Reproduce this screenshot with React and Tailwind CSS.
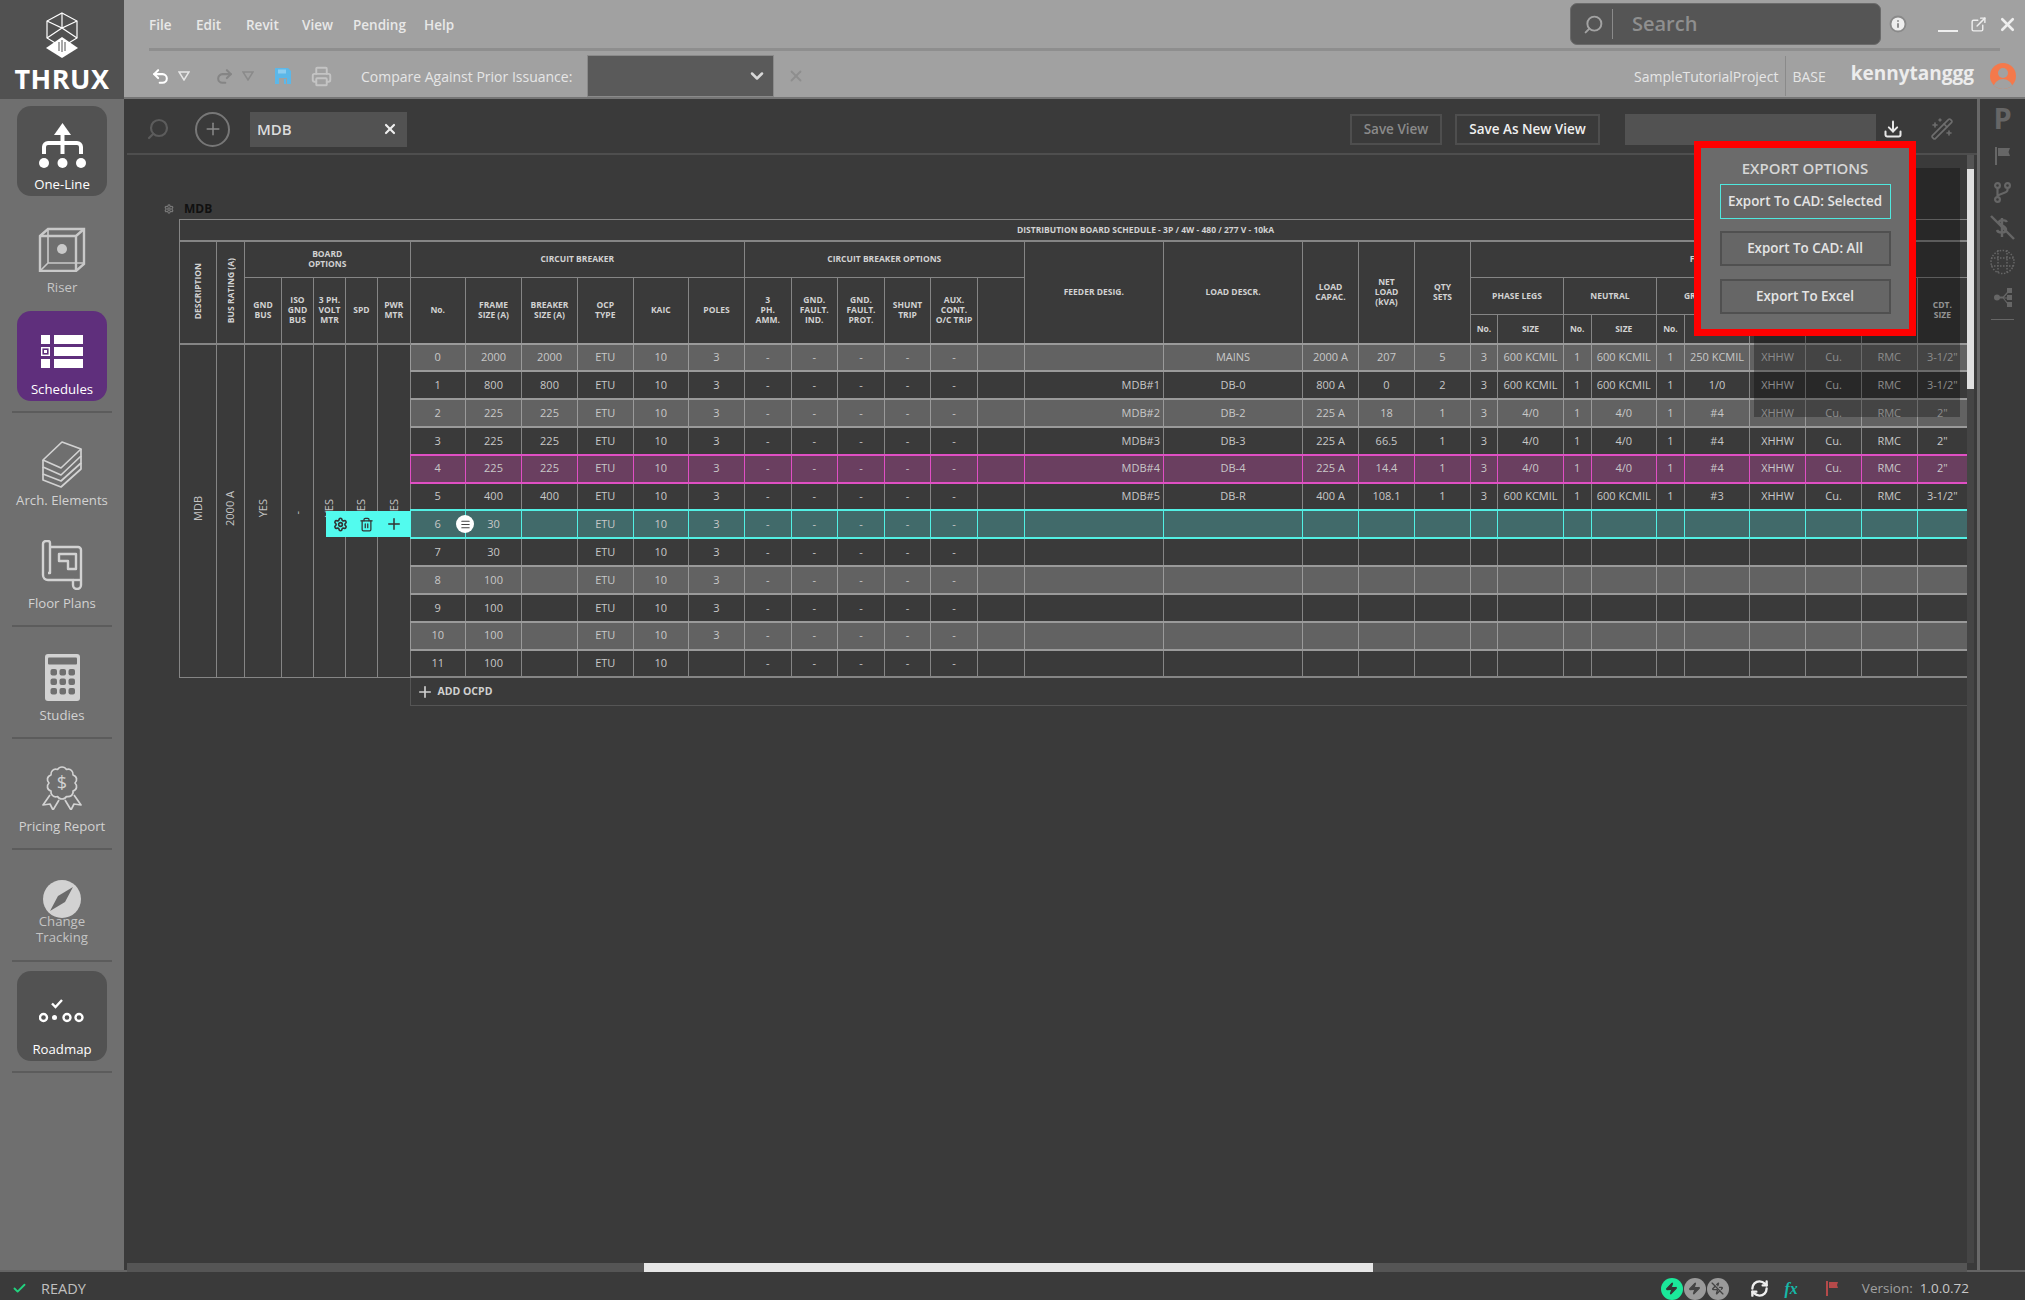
import { Settings, Trash2, Plus, Menu, X, Search, Info, ChevronDown, Undo2, Redo2, Printer, Download, WandSparkles, Check, Zap, ZapOff, RefreshCw, ExternalLink } from "lucide-react";

const colWidths = [
  "w-[37px]", "w-[28px]", "w-[37px]", "w-[32px]", "w-[32px]", "w-[32px]", "w-[32.5px]",
  "w-[55.5px]", "w-[56px]", "w-[56px]", "w-[55.5px]", "w-[55.5px]", "w-[56px]",
  "w-[46.5px]", "w-[46.5px]", "w-[47px]", "w-[46px]", "w-[47px]", "w-[46.5px]",
  "w-[139.5px]", "w-[139px]", "w-[56px]", "w-[56px]", "w-[56px]",
  "w-[27px]", "w-[66px]", "w-[27.5px]", "w-[65.5px]", "w-[28px]", "w-[65px]",
  "w-[56px]", "w-[56px]", "w-[55.5px]", "w-[50.5px]",
];

const big = ["3", "600 KCMIL", "1", "600 KCMIL", "1"];
const small = ["3", "4/0", "1", "4/0", "1"];
const dashes = ["-", "-", "-", "-", "-", ""];
const tail = ["XHHW", "Cu.", "RMC"];
const blankTail = Array(16).fill("");

const rows = [
  { tone: "gray", cells: ["0", "2000", "2000", "ETU", "10", "3", ...dashes, "", "MAINS", "2000 A", "207", "5", ...big, "250 KCMIL", ...tail, '3-1/2"'] },
  { tone: "plain", cells: ["1", "800", "800", "ETU", "10", "3", ...dashes, "MDB#1", "DB-0", "800 A", "0", "2", ...big, "1/0", ...tail, '3-1/2"'] },
  { tone: "gray", cells: ["2", "225", "225", "ETU", "10", "3", ...dashes, "MDB#2", "DB-2", "225 A", "18", "1", ...small, "#4", ...tail, '2"'] },
  { tone: "plain", cells: ["3", "225", "225", "ETU", "10", "3", ...dashes, "MDB#3", "DB-3", "225 A", "66.5", "1", ...small, "#4", ...tail, '2"'] },
  { tone: "purple", cells: ["4", "225", "225", "ETU", "10", "3", ...dashes, "MDB#4", "DB-4", "225 A", "14.4", "1", ...small, "#4", ...tail, '2"'] },
  { tone: "plain", cells: ["5", "400", "400", "ETU", "10", "3", ...dashes, "MDB#5", "DB-R", "400 A", "108.1", "1", ...big, "#3", ...tail, '3-1/2"'] },
  { tone: "teal", cells: ["6", "30", "", "ETU", "10", "3", ...dashes, "", ...blankTail] },
  { tone: "plain", cells: ["7", "30", "", "ETU", "10", "3", ...dashes, "", ...blankTail] },
  { tone: "gray", cells: ["8", "100", "", "ETU", "10", "3", ...dashes, "", ...blankTail] },
  { tone: "plain", cells: ["9", "100", "", "ETU", "10", "3", ...dashes, "", ...blankTail] },
  { tone: "gray", cells: ["10", "100", "", "ETU", "10", "3", ...dashes, "", ...blankTail] },
  { tone: "plain", cells: ["11", "100", "", "ETU", "10", "", ...dashes, "", ...blankTail] },
];

const toneCell = {
  gray: "bg-[#626262] border-[#9a9a9a]",
  plain: "bg-[#3a3a3a] border-[#858585]",
  purple: "bg-[#6a3f60] border-[#e04fc4]",
  teal: "bg-[#416a6a] border-[#52f0e4]",
};
const nextBottom = {
  purple: "border-b-[#e04fc4]",
  teal: "border-b-[#52f0e4]",
  gray: "border-b-[#9a9a9a]",
  plain: "",
};

function Th({ children, className = "", ...props }) {
  return (
    <th
      {...props}
      className={`border border-[#858585] p-0 text-center align-middle text-[8.5px] font-bold leading-[10px] text-[#d2d2d2] ${className}`}
    >
      {children}
    </th>
  );
}

function VerticalHead({ children }) {
  return <span className="inline-block rotate-180 [writing-mode:vertical-rl]">{children}</span>;
}

function VerticalCell({ children, last }) {
  return (
    <td rowSpan={12} className={`border border-t-2 border-[#858585] bg-[#3a3a3a] p-0 text-center align-middle text-[11px] text-[#c4c4c4] ${last ? "border-r-0" : ""}`}>
      <span className="inline-block rotate-180 [writing-mode:vertical-rl]">{children}</span>
    </td>
  );
}

function ScheduleTable() {
  return (
    <table className="w-[1788px] table-fixed border-collapse">
      <colgroup>
        {colWidths.map((w, i) => (
          <col key={i} className={w} />
        ))}
      </colgroup>
      <thead>
        <tr className="h-[21px]">
          <Th colSpan={34} className="border-b-2 pl-[144px]">
            DISTRIBUTION BOARD SCHEDULE - 3P / 4W - 480 / 277 V - 10kA
          </Th>
        </tr>
        <tr className="h-[37px]">
          <Th rowSpan={3}><VerticalHead>DESCRIPTION</VerticalHead></Th>
          <Th rowSpan={3}><VerticalHead>BUS RATING (A)</VerticalHead></Th>
          <Th colSpan={5}>BOARD<br />OPTIONS</Th>
          <Th colSpan={6}>CIRCUIT BREAKER</Th>
          <Th colSpan={6}>CIRCUIT BREAKER OPTIONS</Th>
          <Th rowSpan={3}>FEEDER DESIG.</Th>
          <Th rowSpan={3}>LOAD DESCR.</Th>
          <Th rowSpan={3}>LOAD<br />CAPAC.</Th>
          <Th rowSpan={3}>NET<br />LOAD<br />(kVA)</Th>
          <Th rowSpan={3}>QTY<br />SETS</Th>
          <Th colSpan={10} className="pr-[28px]">FEEDER</Th>
        </tr>
        <tr className="h-[37px]">
          <Th rowSpan={2}>GND<br />BUS</Th>
          <Th rowSpan={2}>ISO<br />GND<br />BUS</Th>
          <Th rowSpan={2}>3 PH.<br />VOLT<br />MTR</Th>
          <Th rowSpan={2}>SPD</Th>
          <Th rowSpan={2}>PWR<br />MTR</Th>
          <Th rowSpan={2}>No.</Th>
          <Th rowSpan={2}>FRAME<br />SIZE (A)</Th>
          <Th rowSpan={2}>BREAKER<br />SIZE (A)</Th>
          <Th rowSpan={2}>OCP<br />TYPE</Th>
          <Th rowSpan={2}>KAIC</Th>
          <Th rowSpan={2}>POLES</Th>
          <Th rowSpan={2}>3<br />PH.<br />AMM.</Th>
          <Th rowSpan={2}>GND.<br />FAULT.<br />IND.</Th>
          <Th rowSpan={2}>GND.<br />FAULT.<br />PROT.</Th>
          <Th rowSpan={2}>SHUNT<br />TRIP</Th>
          <Th rowSpan={2}>AUX.<br />CONT.<br />O/C TRIP</Th>
          <Th rowSpan={2}></Th>
          <Th colSpan={2}>PHASE LEGS</Th>
          <Th colSpan={2}>NEUTRAL</Th>
          <Th colSpan={2}>GROUND</Th>
          <Th rowSpan={2}>COND.<br />TYPE</Th>
          <Th rowSpan={2}>COND.<br />MAT.</Th>
          <Th rowSpan={2}>CDT.<br />TYPE</Th>
          <Th rowSpan={2}>CDT.<br />SIZE</Th>
        </tr>
        <tr className="h-[29px]">
          <Th>No.</Th><Th>SIZE</Th><Th>No.</Th><Th>SIZE</Th><Th>No.</Th><Th>SIZE</Th>
        </tr>
      </thead>
      <tbody>
        {rows.map((row, r) => {
          const next = rows[r + 1];
          return (
            <tr key={row.cells[0]} className="h-[27.83px]">
              {r === 0 ? (
                <>
                  <VerticalCell>MDB</VerticalCell>
                  <VerticalCell>2000 A</VerticalCell>
                  <VerticalCell>YES</VerticalCell>
                  <VerticalCell>-</VerticalCell>
                  <VerticalCell>YES</VerticalCell>
                  <VerticalCell>YES</VerticalCell>
                  <VerticalCell last>YES</VerticalCell>
                </>
              ) : null}
              {row.cells.map((cell, c) => (
                <td
                  key={c}
                  className={`relative border border-y-2 p-0 text-[11px] text-[#c8c8c8] ${toneCell[row.tone]} ${next ? nextBottom[next.tone] : ""} ${c === 12 ? "pr-[3px] text-right" : "text-center"}`}
                >
                  {cell}
                  {row.tone === "teal" && c === 0 ? (
                    <div className="absolute right-full top-0 flex h-full w-[85px] items-center justify-around bg-[#52fbee] px-[2px] text-[#333]">
                      <Settings size={15} strokeWidth={2.6} />
                      <Trash2 size={15} strokeWidth={2} />
                      <Plus size={18} strokeWidth={2} />
                    </div>
                  ) : null}
                  {row.tone === "teal" && c === 0 ? (
                    <div className="absolute -right-[9px] top-[4px] z-10 flex h-[18px] w-[18px] items-center justify-center rounded-full bg-white text-[#444]">
                      <Menu size={11} strokeWidth={2.5} />
                    </div>
                  ) : null}
                </td>
              ))}
            </tr>
          );
        })}
        <tr className="h-[28px]">
          <td colSpan={7} className="p-0"></td>
          <td colSpan={27} className="border-b border-l border-[#555] p-0">
            <div className="flex items-center pl-[5px] text-[10.5px] font-bold text-[#d0d0d0]">
              <Plus size={18} strokeWidth={2.2} className="mr-[4px]" />
              ADD OCPD
            </div>
          </td>
        </tr>
      </tbody>
    </table>
  );
}

function Logo() {
  return (
    <div className="flex h-[99px] flex-col items-center bg-[#515151] pt-[12px]">
      <svg width="32" height="46" viewBox="0 0 32 46" fill="none" stroke="#fff" strokeWidth="1.2">
        <path d="M16 1 31 9v17l-15 9-15-9V9z" />
        <path d="M1 9l15 7 15-7M16 1v15M1 26l15-10 15 10" />
        <path d="M16 25 32 36 16 46 0 36z" fill="#fff" stroke="none" />
        <path d="M13 30v9M16 28v12M19 30v9" stroke="#515151" strokeWidth="1" />
      </svg>
      <div className="mt-[7px] text-[27px] font-bold leading-[28px] tracking-[0.5px] text-white">THRUX</div>
    </div>
  );
}

function OneLineIcon() {
  return (
    <svg width="47" height="46" viewBox="0 0 47 46" fill="none" stroke="#fff" strokeWidth="4">
      <path d="M23.5 0 32 12H15z" fill="#fff" stroke="none" />
      <path d="M23.5 10v21" />
      <path d="M5 31v-7a4 4 0 0 1 4-4h29a4 4 0 0 1 4 4v7" />
      <circle cx="5" cy="40" r="5" fill="#fff" stroke="none" />
      <circle cx="23.5" cy="40" r="5" fill="#fff" stroke="none" />
      <circle cx="42" cy="40" r="5" fill="#fff" stroke="none" />
    </svg>
  );
}

function RiserIcon() {
  return (
    <svg width="48" height="45" viewBox="0 0 48 45" fill="none" stroke="#c9c9c9" strokeWidth="2.4">
      <path d="M2 9 10 2h36v35l-8 7H2z" />
      <path d="M2 9h36v35M38 9l8-7" />
      <path d="M10 2v34h36M10 36l-8 8" strokeWidth="1.6" />
      <circle cx="24" cy="22" r="5" fill="#c9c9c9" stroke="none" />
    </svg>
  );
}

function SchedulesIcon() {
  return (
    <svg width="42" height="33" viewBox="0 0 42 33" fill="#fff">
      <rect x="0" y="0" width="9" height="9" />
      <rect x="13" y="0" width="29" height="9" />
      <rect x="0.7" y="12.7" width="7.6" height="7.6" fill="none" stroke="#fff" strokeWidth="1.4" />
      <rect x="3" y="15" width="3" height="3" />
      <rect x="13" y="12" width="29" height="9" />
      <rect x="0" y="24" width="9" height="9" />
      <rect x="13" y="24" width="29" height="9" />
    </svg>
  );
}

function ArchIcon() {
  return (
    <svg width="40" height="47" viewBox="0 0 40 47" className="mt-[4px]" fill="none" stroke="#d2d2d2" strokeWidth="1.7" strokeLinejoin="round">
      <path d="M20 1 39 8 19 27 1 19z" />
      <path d="M1 19v7l18 8 20-19V8" />
      <path d="M1 26v7l18 7 20-18v-7" />
      <path d="M1 33v6l18 7 20-18v-6" />
    </svg>
  );
}

function FloorIcon() {
  return (
    <svg width="42" height="50" viewBox="0 0 42 50" fill="none" stroke="#d2d2d2" strokeWidth="2.4" strokeLinejoin="round">
      <path d="M9 7h28a3 3 0 0 1 3 3v35a4 4 0 0 1-4 4 4 4 0 0 1-4-4v-5H7a5 5 0 0 1-5-5V4a3 3 0 0 1 3-3h2a2 2 0 0 1 2 2v30H7" />
      <path d="M32 40h8" />
      <path d="M18 14h17v15h-8v-8h-9z" />
    </svg>
  );
}

function StudiesIcon() {
  const keys = [];
  for (let y of [15, 24.5, 34]) for (let x of [6, 15, 24]) keys.push([x, y]);
  return (
    <svg width="35" height="47" viewBox="0 0 35 47">
      <rect width="35" height="47" rx="3" fill="#d2d2d2" />
      <rect x="3" y="3.5" width="29" height="7" rx="1" fill="#6f6f6f" />
      {keys.map(([x, y]) => (
        <rect key={`${x}-${y}`} x={x - 3 + 2.5} y={y} width="6.5" height="6.5" rx="2" fill="#6f6f6f" />
      ))}
    </svg>
  );
}

function PricingIcon() {
  return (
    <svg width="40" height="44" viewBox="0 0 40 44" fill="none" stroke="#d2d2d2" strokeWidth="1.7" strokeLinejoin="round">
      <path d="M20 1q3 0 4.500 2.500 3-1 5 1t1.500 4.500q3 1 3.500 3.500t-1.500 4.500q2 2 1.500 4.500t-3.500 3.500q.5 3-1.500 4.500t-5 1Q23 33 20 33t-4.500-2.500q-3 1-5-1T9 25q-3-1-3.500-3.500T7 17q-2-2-1.500-4.500T9 9q-.5-2.500 1.500-4.500t5-1Q17 1 20 1z" />
      <path d="M8 29 1 39l7-1 3 6 6-10M32 29l7 10-7-1-3 6-6-10" />
      <text x="20" y="23" textAnchor="middle" fontSize="18" fill="#d2d2d2" stroke="none" fontFamily="Open Sans, sans-serif">$</text>
    </svg>
  );
}

function CompassIcon() {
  return (
    <svg width="38" height="38" viewBox="0 0 38 38">
      <circle cx="19" cy="19" r="19" fill="#d2d2d2" />
      <path d="M30 7 22 22 7 31 15 16z" fill="#6a6a6a" />
    </svg>
  );
}

function RoadmapIcon() {
  return (
    <svg width="46" height="24" viewBox="0 0 46 24" fill="none" stroke="#fff" strokeWidth="2.4">
      <path d="M13 4.500 16.500 8 23 1" />
      <circle cx="4.500" cy="18.500" r="3.500" />
      <circle cx="15.500" cy="18.500" r="2.500" fill="#fff" stroke="none" />
      <circle cx="28" cy="18.500" r="3.500" />
      <circle cx="40" cy="18.500" r="3.500" />
    </svg>
  );
}

function NavItem({ icon, label, active, className = "", labelClass = "mt-[6px] text-[#d2d2d2]" }) {
  return (
    <div className={`mx-auto flex h-[90px] w-[90px] shrink-0 flex-col items-center rounded-[14px] ${active || ""} ${className}`}>
      <div className="mt-[16px] flex h-[48px] items-center justify-center">{icon}</div>
      <div className={`whitespace-nowrap text-center text-[13.2px] leading-[16px] ${labelClass}`}>{label}</div>
    </div>
  );
}

function NavRule({ className = "" }) {
  return <div className={`mx-[12px] h-[2px] shrink-0 bg-[#5c5c5c] ${className}`} />;
}

function Sidebar() {
  return (
    <aside className="flex w-[124px] shrink-0 flex-col">
      <Logo />
      <nav className="flex flex-1 flex-col bg-[#6f6f6f] pt-[7px]">
        <NavItem icon={<OneLineIcon />} label="One-Line" active="bg-[#525252]" labelClass="mt-[6px] text-white" />
        <NavItem icon={<RiserIcon />} label="Riser" className="mt-[13px]" labelClass="mt-[6px] text-[#c6c6c6]" />
        <NavItem icon={<SchedulesIcon />} label="Schedules" active="bg-[#5f2f7c]" className="mt-[12px]" labelClass="mt-[6px] text-white" />
        <NavRule className="mt-[10px]" />
        <NavItem icon={<ArchIcon />} label="Arch. Elements" className="mt-[9px]" />
        <NavItem icon={<FloorIcon />} label="Floor Plans" className="mt-[13px]" />
        <NavRule className="mt-[10px]" />
        <NavItem icon={<StudiesIcon />} label="Studies" className="mt-[10px]" />
        <NavRule className="mt-[10px]" />
        <NavItem icon={<PricingIcon />} label="Pricing Report" className="mt-[9px]" />
        <NavRule className="mt-[10px]" />
        <NavItem
          icon={<CompassIcon />}
          label={<>Change<br />Tracking</>}
          className="mt-[9px]"
          labelClass="-mt-[10px] text-[#c4c4c4]"
        />
        <NavRule className="mt-[11px]" />
        <NavItem icon={<RoadmapIcon />} label="Roadmap" active="bg-[#525252]" className="mt-[9px]" labelClass="mt-[6px] text-white" />
        <NavRule className="mt-[10px]" />
      </nav>
    </aside>
  );
}

function Triangle({ color }) {
  return (
    <svg width="12" height="10" viewBox="0 0 12 10" fill="none" stroke={color} strokeWidth="1.5">
      <path d="M1 1h10L6 9z" />
    </svg>
  );
}

function TopBar() {
  return (
    <header className="h-[99px] shrink-0 border-b-2 border-[#757575] bg-[#a1a1a1]">
      <div className="flex h-[48px] items-center pl-[25px] pr-[7px] text-[13.5px] font-semibold text-[#e8e8e8]">
        <div className="mt-[2px] flex">
          <span className="w-[47px]">File</span>
          <span className="w-[50px]">Edit</span>
          <span className="w-[56px]">Revit</span>
          <span className="w-[51px]">View</span>
          <span className="w-[71px]">Pending</span>
          <span>Help</span>
        </div>
        <div className="ml-auto flex h-[42px] w-[311px] items-center rounded-[7px] border border-[#6b6b6b] bg-[#555555]">
          <Search size={21} strokeWidth={2.2} className="ml-[12px] -scale-x-100 text-[#a3a3a3]" />
          <div className="ml-[8px] h-[30px] w-px bg-[#8a8a8a]" />
          <span className="ml-[19px] text-[20px] font-semibold text-[#8f8f8f]">Search</span>
        </div>
        <Info size={18} strokeWidth={2.5} className="ml-[8px] fill-[#eeeeee] text-[#8a8a8a]" />
        <div className="ml-[31px] mt-[14px] h-[2px] w-[20px] bg-[#eeeeee]" />
        <ExternalLink size={17} strokeWidth={2} className="ml-[12px] text-[#eeeeee]" />
        <X size={21} strokeWidth={3} className="ml-[10px] text-[#eeeeee]" />
      </div>
      <div className="mx-[25px] h-[3px] bg-[#8e8e8e]" />
      <div className="flex h-[46px] items-center pl-[27px] pt-[4px] text-[14px] text-[#e6e6e6]">
        <Undo2 size={19} strokeWidth={2.6} className="text-white" />
        <div className="ml-[8px]"><Triangle color="#e6e6e6" /></div>
        <Redo2 size={19} strokeWidth={2.6} className="ml-[25px] text-[#858585]" />
        <div className="ml-[8px]"><Triangle color="#8a8a8a" /></div>
        <svg width="16" height="16" viewBox="0 0 16 16" className="ml-[21px]" fill="#5cb7e8">
          <path d="M0 0h13l3 3v13H0z" />
          <path d="M3 1.500h8v4H3z" fill="#8dcdf0" />
          <path d="M4 10h8v6H4z" fill="#a1a1a1" />
          <path d="M9 11h2v5H9z" fill="#5cb7e8" />
        </svg>
        <Printer size={21} strokeWidth={2.2} className="ml-[20px] text-[#c4c4c4]" />
        <span className="ml-[29px] w-[227px] whitespace-nowrap">Compare Against Prior Issuance:</span>
        <div className="flex h-[40px] w-[185px] items-center justify-end bg-[#5a5a5a] pr-[6px] shadow-[0_0_0_1px_#8a8a8a]">
          <ChevronDown size={20} strokeWidth={3} className="text-[#d8d8d8]" />
        </div>
        <X size={18} strokeWidth={2.4} className="ml-[14px] text-[#8e8e8e]" />
        <span className="ml-auto">SampleTutorialProject</span>
        <div className="ml-[7px] h-[40px] w-px bg-[#8a8a8a]" />
        <span className="ml-[6px]">BASE</span>
        <span className="ml-[25px] -mt-[6px] text-[19px] font-bold text-[#ececec]">kennytanggg</span>
        <div className="relative ml-[16px] mr-[9px] h-[26px] w-[26px] overflow-hidden rounded-full bg-[#f4794b]">
          <div className="mx-auto mt-[5px] h-[10px] w-[10px] rounded-full bg-[#a1a1a1]" />
          <div className="mx-auto mt-[1px] h-[12px] w-[20px] rounded-t-full bg-[#a1a1a1]" />
        </div>
      </div>
    </header>
  );
}

function ViewBar() {
  return (
    <div className="ml-[3px] flex h-[56px] shrink-0 items-center border-b-2 border-[#4e4e4e] pr-[23px] pt-[6px]">
      <Search size={24} strokeWidth={2.2} className="ml-[19px] -scale-x-100 text-[#5c5c5c]" />
      <div className="ml-[25px] flex h-[35px] w-[35px] items-center justify-center rounded-full border-[2px] border-[#777777] text-[#8a8a8a]">
        <Plus size={20} strokeWidth={1.8} />
      </div>
      <div className="ml-[20px] flex h-[35px] w-[157px] items-center justify-between bg-[#525252] pl-[7px] pr-[9px] text-[15px] font-semibold text-[#dcdcdc]">
        <span>MDB</span>
        <X size={16} strokeWidth={3.2} className="text-[#eeeeee]" />
      </div>
      <button className="ml-auto flex h-[31px] w-[92px] items-center justify-center border-2 border-[#4e4e4e] text-[13.5px] font-semibold text-[#8a8a8a]">
        Save View
      </button>
      <button className="ml-[13px] flex h-[31px] w-[145px] items-center justify-center border-2 border-[#4e4e4e] text-[13.5px] font-semibold text-[#f0f0f0]">
        Save As New View
      </button>
      <div className="ml-[25px] h-[31px] w-[251px] bg-[#525252]" />
      <Download size={20} strokeWidth={2.4} className="ml-[7px] text-[#e8e8e8]" />
      <WandSparkles size={24} strokeWidth={1.6} className="ml-[27px] text-[#6e6e6e]" />
    </div>
  );
}

function ExportPopup() {
  return (
    <div className="absolute left-[1570px] top-[42px] z-20 flex h-[195px] w-[222px] flex-col items-center border-[7px] border-[#ff0000] bg-[#6b6b6b] pt-[10px] text-[#e4e4e4]">
      <div className="text-[15px] font-semibold leading-[20px] text-[#d6d6d6]">EXPORT OPTIONS</div>
      <button className="mt-[6px] h-[35px] w-[171px] border border-[#4fe8de] bg-[#666666] text-[13.4px] font-semibold">
        Export To CAD: Selected
      </button>
      <button className="mt-[12px] h-[35px] w-[171px] border-2 border-[#505050] bg-[#666666] text-[13.4px] font-semibold">
        Export To CAD: All
      </button>
      <button className="mt-[13px] h-[35px] w-[171px] border-2 border-[#505050] bg-[#666666] text-[13.4px] font-semibold">
        Export To Excel
      </button>
    </div>
  );
}

function RightRail() {
  return (
    <aside className="flex w-[48px] shrink-0 flex-col items-center border-l-[3px] border-[#696969] bg-[#3a3a3a] text-[#666666]">
      <div className="mt-[2px] h-[34px] text-[29px] font-bold leading-[34px]">P</div>
      <svg width="15" height="18" viewBox="0 0 15 18" className="mt-[12px]" fill="#666666">
        <path d="M0 0h2v18H0zM3 1h12l-1.500 4L15 9H3z" />
      </svg>
      <svg width="17" height="21" viewBox="0 0 17 21" className="mt-[17px]" fill="none" stroke="#666666" strokeWidth="2.2">
        <circle cx="3.500" cy="3.500" r="2.400" />
        <circle cx="13.500" cy="3.500" r="2.400" />
        <circle cx="3.500" cy="17.500" r="2.400" />
        <path d="M3.500 6v9M13.500 6v2c0 4-10 3-10 7" />
      </svg>
      <svg width="25" height="25" viewBox="0 0 25 25" className="mt-[12px]" fill="none" stroke="#666666" strokeWidth="2.4">
        <path d="M1 1 24 24" />
        <path d="M17 7c-1-2-7-3-8 0s8 4 7 8-8 3-9 0M12 3v19" />
      </svg>
      <svg width="25" height="26" viewBox="0 0 25 26" className="mt-[9px]" fill="none" stroke="#666666" strokeWidth="1.5" strokeDasharray="1.500 1.500">
        <circle cx="12.500" cy="13" r="11.500" />
        <path d="M1 9h23M1 17h23M8 1v24M17 1v24" />
      </svg>
      <svg width="18" height="19" viewBox="0 0 18 19" className="mt-[13px]" fill="#666666">
        <circle cx="3" cy="9.500" r="3" />
        <path d="M3 8.500h6L14 3v2L10 9.500h4v1h-4L14 15v2L9 10.500H3z" />
        <rect x="13" y="0" width="5" height="5" />
        <rect x="13" y="7" width="5" height="5" />
        <rect x="13" y="14" width="5" height="5" />
      </svg>
      <div className="mt-[12px] h-px w-[23px] bg-[#666666]" />
    </aside>
  );
}

function StatusBar() {
  return (
    <footer className="flex h-[28px] shrink-0 items-center bg-[#3a3a3a] pl-[12px] pt-[5px] text-[14.5px] text-[#c0c0c0] shadow-[0_-2px_0_#646464]">
      <Check size={15} strokeWidth={3} className="text-[#22d37f]" />
      <span className="ml-[14px] font-medium">READY</span>
      <div className="ml-auto flex h-[22px] w-[22px] items-center justify-center rounded-full bg-[#1be89a]">
        <Zap size={13} strokeWidth={2} className="fill-[#333] text-[#333]" />
      </div>
      <div className="ml-[1px] flex h-[22px] w-[22px] items-center justify-center rounded-full bg-[#9a9a9a]">
        <Zap size={13} strokeWidth={2} className="fill-[#444] text-[#444]" />
      </div>
      <div className="ml-[1px] flex h-[22px] w-[22px] items-center justify-center rounded-full bg-[#9a9a9a]">
        <ZapOff size={13} strokeWidth={2.4} className="text-[#444]" />
      </div>
      <RefreshCw size={19} strokeWidth={3} className="ml-[21px] text-[#eeeeee]" />
      <span className="ml-[16px] font-['Liberation_Serif',serif] text-[16px] italic font-bold text-[#16b8a8]">fx</span>
      <svg width="12" height="15" viewBox="0 0 12 15" className="ml-[28px]" fill="#b54a4a">
        <path d="M0 0h2v15H0zM3 1h9l-1 3 1 3H3z" />
      </svg>
      <span className="ml-[24px] text-[13.5px] text-[#a0a0a0]">Version:</span>
      <span className="ml-[7px] mr-[56px] text-[13.5px] text-[#c8c8c8]">1.0.0.72</span>
    </footer>
  );
}

export default function App() {
  return (
    <div className="flex h-[1300px] w-[2025px] flex-col overflow-hidden bg-[#3a3a3a] font-['Open_Sans',sans-serif]">
      <div className="flex min-h-0 flex-1">
        <Sidebar />
        <div className="flex min-w-0 flex-1 flex-col">
          <TopBar />
          <div className="flex min-h-0 flex-1">
            <main className="relative flex min-w-0 flex-1 flex-col">
              <ViewBar />
              <div className="flex min-h-0 flex-1">
                <div className="min-w-0 flex-1 overflow-hidden pl-[55px] pt-[46px]">
                  <div className="flex h-[16px] items-center">
                    <Settings size={10} strokeWidth={3} className="-ml-[15px] text-[#777777]" />
                    <span className="ml-[10px] text-[12px] font-bold text-[#111111]">MDB</span>
                  </div>
                  <div className="mt-[2px]"><ScheduleTable /></div>
                </div>
                <div className="mr-[3px] flex w-[7px] shrink-0 flex-col bg-[#454545]">
                  <div className="h-[14px] bg-[#555555]" />
                  <div className="h-[220px] bg-[#e0e0e0]" />
                </div>
              </div>
              <div className="ml-[3px] mr-[10px] h-[9px] shrink-0 bg-[#555555] pl-[517px]">
                <div className="h-full w-[729px] bg-[#e6e6e6]" />
              </div>
              <div className="absolute left-[1630px] top-[69px] z-10 h-[249px] w-[206px] bg-black/30" />
              <ExportPopup />
            </main>
            <RightRail />
          </div>
        </div>
      </div>
      <StatusBar />
    </div>
  );
}
